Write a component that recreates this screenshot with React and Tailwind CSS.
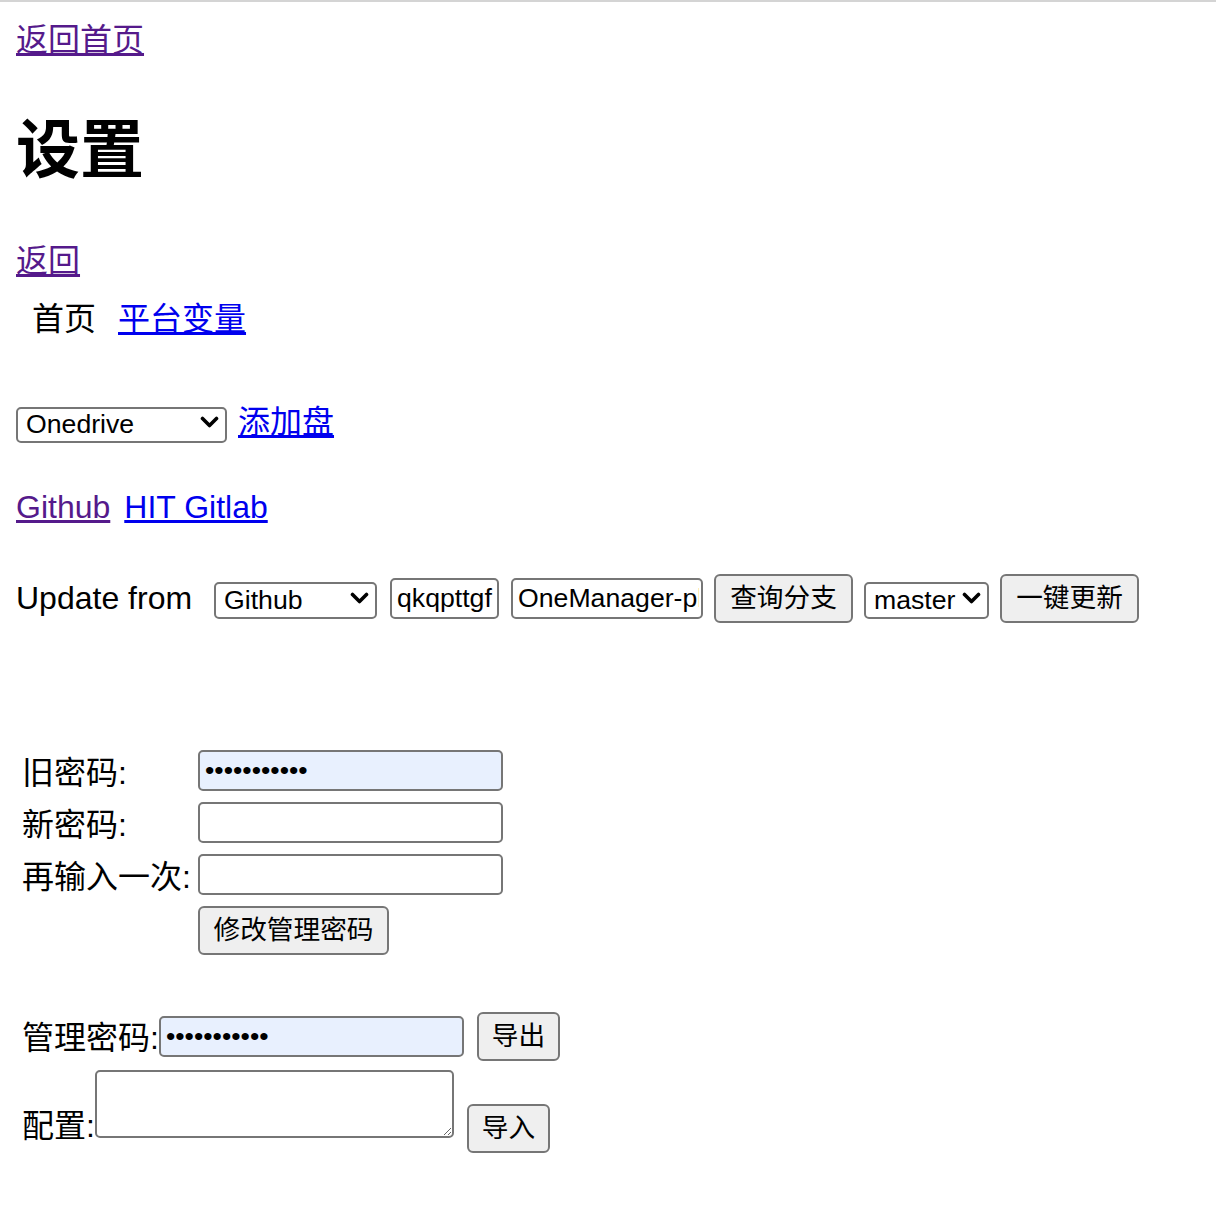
import { useState } from "react";

// chevron drawn like the native select arrow
function Chevron() {
  return (
    <svg width="19" height="12" viewBox="0 0 19 12" className="pointer-events-none absolute right-[8px] top-1/2 -translate-y-1/2">
      <path d="M2.5 2.5 L9.5 9.5 L16.5 2.5" fill="none" stroke="#000" strokeWidth="3.6" strokeLinecap="round" strokeLinejoin="round" />
    </svg>
  );
}

function Select({ options, value, onChange, className }) {
  return (
    <div className={`relative shrink-0 ${className}`}>
      <select
        value={value}
        onChange={(e) => onChange(e.target.value)}
        className="h-full w-full appearance-none rounded-[5px] border-2 border-[#767676] bg-white pl-[8px] pr-[28px] text-[26.67px] leading-[31px] text-black outline-none"
      >
        {options.map((o) => (
          <option key={o} value={o}>{o}</option>
        ))}
      </select>
      <Chevron />
    </div>
  );
}

const btn = "shrink-0 rounded-[6px] border-2 border-[#767676] bg-[#efefef] px-[12px] text-[26.67px] leading-[31px] text-black whitespace-nowrap";
const input = "rounded-[5px] border-2 border-[#767676] pl-[5px] pr-[2px] text-[26.67px] leading-[31px] text-black outline-none";

export default function App() {
  const [disk, setDisk] = useState("Onedrive");
  const [source, setSource] = useState("Github");
  const [branch, setBranch] = useState("master");

  return (
    <div className="min-h-[1226px] bg-white text-[32px] leading-[37px] text-black font-['Liberation_Sans','Noto_Sans_CJK_SC',sans-serif]">
      <div className="h-[2px] bg-[#d4d4d4]" />
      <div className="px-4">
        {/* 顶部链接 */}
        <div className="mt-[19.5px] flex h-[37px] items-center">
          <a href="#" className="text-[#551a8b] underline">返回首页</a>
        </div>

        <h1 className="mt-[54.5px] h-[74px] text-[64px] font-bold leading-[74px]">设置</h1>

        <div className="mt-[55.5px] flex h-[37px] items-center">
          <a href="#" className="text-[#551a8b] underline">返回</a>
        </div>

        <div className="mt-[21px] flex h-[37px] items-center gap-[22px] pl-4">
          <span>首页</span>
          <a href="#" className="text-[#0000ee] underline">平台变量</a>
        </div>

        {/* 选择盘 */}
        <div className="mt-[66px] flex h-[37px] items-center">
          <Select options={["Onedrive", "Googledrive", "Aliyundrive"]} value={disk} onChange={setDisk} className="h-[36px] w-[211px]" />
          <a href="#" className="ml-[11px] text-[#0000ee] underline">添加盘</a>
        </div>

        <div className="mt-[48px] flex h-[37px] items-center">
          <a href="#" className="text-[#551a8b] underline">Github</a>
          <a href="#" className="ml-[14px] text-[#0000ee] underline">HIT Gitlab</a>
        </div>

        {/* 更新 */}
        <div className="mt-[48px] flex h-[49px] items-center">
          <span className="w-[188px] shrink-0 whitespace-nowrap">Update from</span>
          <Select options={["Github", "HIT Gitlab"]} value={source} onChange={setSource} className="ml-[10px] h-[37px] w-[163px]" />
          <input type="text" defaultValue="qkqpttgf" className={`${input} ml-[13px] h-[41px] w-[109px]`} />
          <input type="text" defaultValue="OneManager-php" className={`${input} ml-[12px] h-[41px] w-[192px]`} />
          <button className={`${btn} ml-[11px] h-[49px] w-[139px]`}>查询分支</button>
          <Select options={["master"]} value={branch} onChange={setBranch} className="ml-[11px] h-[37px] w-[125px]" />
          <button className={`${btn} ml-[11px] h-[49px] w-[139px]`}>一键更新</button>
        </div>

        {/* 修改密码 */}
        <div className="mt-[127px] grid grid-cols-[182px_305px] gap-y-[11px]">
          <span className="flex h-[41px] items-center whitespace-nowrap pl-[6px] pt-[6px]">旧密码:</span>
          <input type="password" defaultValue="12345678901" className={`${input} h-[41px] w-[305px] bg-[#e8f0fe]`} />
          <span className="flex h-[41px] items-center whitespace-nowrap pl-[6px] pt-[6px]">新密码:</span>
          <input type="password" className={`${input} h-[41px] w-[305px] bg-white`} />
          <span className="flex h-[41px] items-center whitespace-nowrap pl-[6px] pt-[6px]">再输入一次:</span>
          <input type="password" className={`${input} h-[41px] w-[305px] bg-white`} />
          <span />
          <button className={`${btn} h-[49px] w-[191px]`}>修改管理密码</button>
        </div>

        {/* 导入导出 */}
        <div className="mt-[57px] flex items-start">
          <span className="mt-[8px] h-[37px] shrink-0 whitespace-nowrap pl-[6px]">管理密码:</span>
          <input type="password" defaultValue="12345678901" className={`${input} mt-[4px] h-[41px] w-[305px] shrink-0 bg-[#e8f0fe]`} />
          <button className={`${btn} ml-[13px] h-[49px] w-[83px]`}>导出</button>
        </div>
        <div className="mt-[9px] flex items-start">
          <span className="mt-[38px] h-[37px] shrink-0 whitespace-nowrap pl-[6px]">配置:</span>
          <textarea className="h-[68px] w-[359px] shrink-0 rounded-[5px] border-2 border-[#767676] bg-white p-[4px] text-[26.67px] outline-none" />
          <button className={`${btn} ml-[13px] mt-[34px] h-[49px] w-[83px]`}>导入</button>
        </div>
      </div>
    </div>
  );
}
